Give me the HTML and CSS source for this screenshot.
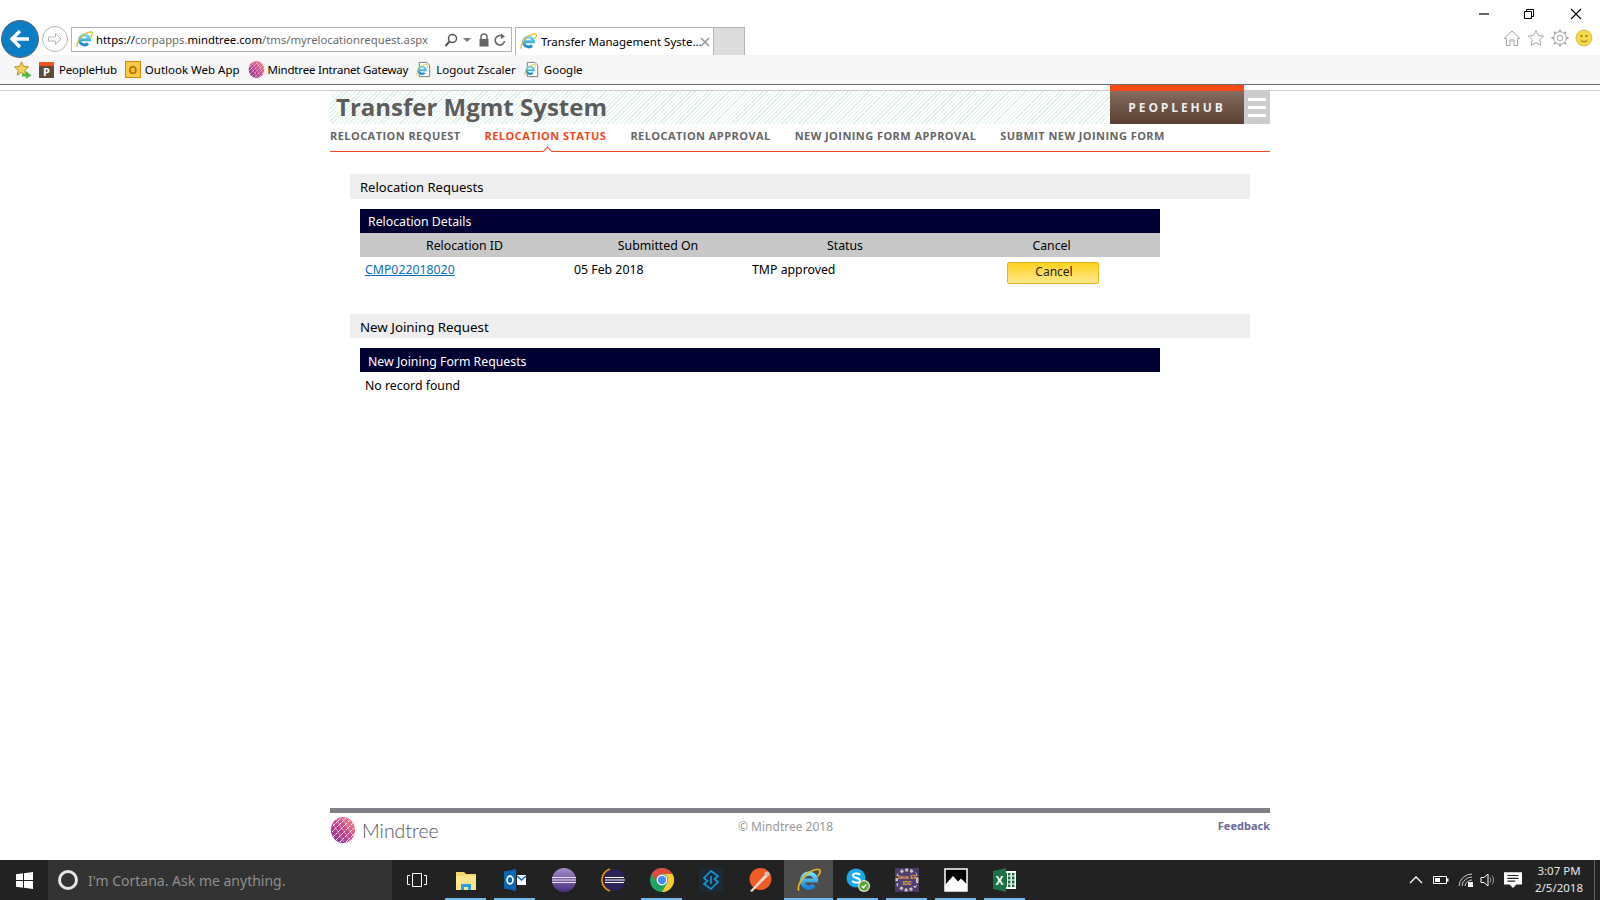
FILE: index.html
```html
<!DOCTYPE html>
<html lang="en">
<head>
    <meta charset="UTF-8">
    <title>Transfer Management System</title>
    <link rel="stylesheet" href="styles.css">
</head>
<body>
    <svg class="defs" width="0" height="0">
        <defs>
            <linearGradient id="ieBlue" x1="0" y1="0" x2="0" y2="1">
                <stop offset="0" stop-color="#6fdcf8"/>
                <stop offset="1" stop-color="#1b86d8"/>
            </linearGradient>
            <linearGradient id="mtGrad" x1="1" y1="0" x2="0" y2="1">
                <stop offset="0" stop-color="#f29a7e"/>
                <stop offset="0.5" stop-color="#c8408e"/>
                <stop offset="1" stop-color="#7b3a96"/>
            </linearGradient>
            <linearGradient id="eclipseGrad" x1="0" y1="0" x2="0" y2="1">
                <stop offset="0" stop-color="#a58cc8"/>
                <stop offset="1" stop-color="#4b2f80"/>
            </linearGradient>
            <symbol id="ie" viewBox="0 0 24 24">
                <path d="M5.500 12.500h13.500A7 7 0 1 0 17 17.500" fill="none" stroke="url(#ieBlue)" stroke-width="4.200"/>
                <path d="M2 22.500C-.5 19 5 9 11 5s11-4.500 12-2.500c.7 1.500-.8 4-2.500 6" fill="none" stroke="#e8b71e" stroke-width="1.700"/>
            </symbol>
            <symbol id="iePage" viewBox="0 0 18 18">
                <path d="M3.500 1.500h8l3 3v12h-11z" fill="#fff" stroke="#777"/>
                <use href="#ie" x="0" y="3" width="13" height="13"/>
            </symbol>
            <symbol id="mindtree" viewBox="0 0 26 26">
                <ellipse cx="13" cy="13" rx="12" ry="13" fill="url(#mtGrad)"/>
                <path d="M3 9 11 1M2 15 16 1M3 20 20 3M6 23 23 6M10 25 25 10M16 25 25 16" stroke="#fff" stroke-width="1" stroke-dasharray="2.500 1"/>
                <path d="M2 5 14 25M6 2 20 24M12 1 24 20" stroke="#fff" stroke-width=".6" opacity=".7"/>
            </symbol>
        </defs>
    </svg>

    <div class="browser">
        <div class="window-row">
            <svg class="win-btn" viewBox="0 0 14 14"><path d="M2 7h10" stroke="#000" stroke-width="1.200"/></svg>
            <svg class="win-btn" viewBox="0 0 14 14"><path d="M2.500 4.500h7v7h-7zM4.500 4.500v-2h7v7h-2" fill="none" stroke="#000"/></svg>
            <svg class="win-btn" viewBox="0 0 14 14"><path d="M2 2l10 10M12 2 2 12" stroke="#000" stroke-width="1.100"/></svg>
        </div>
        <div class="address-row">
            <div class="back-btn">
                <svg viewBox="0 0 24 24" width="24" height="24"><path d="M21 12H5M12 4l-8 8 8 8" fill="none" stroke="#fff" stroke-width="3.400"/></svg>
            </div>
            <div class="forward-btn">
                <svg viewBox="0 0 16 16" width="16" height="16"><path d="M1.500 6h7V2.500L14 8l-5.500 5.500V10h-7z" fill="none" stroke="#b5b5b5"/></svg>
            </div>
            <div class="address-box">
                <svg class="icon-16" viewBox="0 0 24 24"><use href="#ie"/></svg>
                <span class="url">https://<span class="url-dim">corpapps.</span>mindtree.com<span class="url-dim">/tms/myrelocationrequest.aspx</span></span>
                <svg class="addr-tool" viewBox="0 0 14 14"><circle cx="8.500" cy="5.500" r="4" fill="none" stroke="#555" stroke-width="1.500"/><path d="M5.500 8.500 1.500 13" stroke="#555" stroke-width="2"/></svg>
                <svg class="addr-caret" viewBox="0 0 8 4"><path d="M0 0h8L4 4z" fill="#777"/></svg>
                <svg class="addr-tool lock" viewBox="0 0 14 14"><path d="M4 6V4a3 3 0 0 1 6 0v2" fill="none" stroke="#666" stroke-width="1.500"/><rect x="2.500" y="6" width="9" height="7.500" fill="#666"/></svg>
                <svg class="addr-tool refresh" viewBox="0 0 14 14"><path d="M11.500 8A4.700 4.700 0 1 1 9.500 3.400" fill="none" stroke="#666" stroke-width="1.600"/><path d="M8 .5 12 3.500 8 6z" fill="#666"/></svg>
            </div>
            <div class="tab">
                <svg class="icon-16" viewBox="0 0 24 24"><use href="#ie"/></svg>
                <span class="tab-title">Transfer Management Syste...</span>
                <svg class="tab-close" viewBox="0 0 10 10"><path d="M1 1l8 8M9 1 1 9" stroke="#999" stroke-width="1.600"/></svg>
            </div>
            <div class="new-tab"></div>
            <div class="tools">
                <svg class="tool" viewBox="0 0 18 18"><path d="M1 9.500 9 2l8 7.500h-2.500V16.500H11V11H7v5.500H3.500V9.500z" fill="none" stroke="#a8a8a8"/></svg>
                <svg class="tool" viewBox="0 0 18 18"><path d="M9 1.500l2.300 5 5.500.6-4.100 3.700 1.200 5.500L9 13.500l-4.900 2.800 1.200-5.500L1.200 7.100l5.500-.6z" fill="none" stroke="#a8a8a8"/></svg>
                <svg class="tool" viewBox="0 0 18 18"><circle cx="9" cy="9" r="2.800" fill="none" stroke="#a8a8a8"/><circle cx="9" cy="9" r="6.300" fill="none" stroke="#a8a8a8"/><path d="M9 .5v2.200M9 15.300v2.200M.5 9h2.200M15.300 9h2.200M3 3l1.500 1.500M13.500 13.500 15 15M15 3l-1.500 1.500M4.500 13.500 3 15" stroke="#a8a8a8" stroke-width="1.800"/></svg>
                <svg class="tool" viewBox="0 0 18 18"><circle cx="9" cy="9" r="8" fill="#f5d94a" stroke="#bfa93a" stroke-width=".6"/><circle cx="6.500" cy="7" r="1" fill="#7d6a10"/><circle cx="11.500" cy="7" r="1" fill="#7d6a10"/><path d="M5.500 11c2 2.200 5 2.200 7 0" fill="none" stroke="#7d6a10"/></svg>
            </div>
        </div>
        <div class="favorites">
            <svg class="fav-star" viewBox="0 0 18 18"><path d="M7.500 .8l2 4.600 5 .5-3.700 3.300 1 4.900-4.300-2.500-4.300 2.500 1-4.900L.5 5.900l5-.5z" fill="#f3d35a" stroke="#b5902a"/><path d="M8 13h4v-3l5.500 4.500L12 18v-2.500H8z" fill="#56b848"/></svg>
            <div class="fav"><span class="fav-p">P</span><span class="tight">PeopleHub</span></div>
            <div class="fav"><span class="fav-o">O</span><span>Outlook Web App</span></div>
            <div class="fav"><svg class="icon-16" viewBox="0 0 26 26"><use href="#mindtree"/></svg><span class="tight">Mindtree Intranet Gateway</span></div>
            <div class="fav"><svg class="icon-16" viewBox="0 0 18 18"><use href="#iePage"/></svg><span>Logout Zscaler</span></div>
            <div class="fav"><svg class="icon-16" viewBox="0 0 18 18"><use href="#iePage"/></svg><span>Google</span></div>
        </div>
    </div>

    <div class="top-line">
        <div class="wrap top-line-inner"><div class="accent"></div></div>
    </div>

    <div class="wrap page">
        <div class="masthead">
            <div class="title-band">Transfer Mgmt System</div>
            <div class="peoplehub">PEOPLEHUB</div>
            <div class="burger"><span></span><span></span><span></span></div>
        </div>
        <div class="menu">
            <a>RELOCATION REQUEST</a>
            <a class="active">RELOCATION STATUS</a>
            <a>RELOCATION APPROVAL</a>
            <a>NEW JOINING FORM APPROVAL</a>
            <a>SUBMIT NEW JOINING FORM</a>
        </div>

        <div class="section-title first">Relocation Requests</div>
        <table class="grid">
            <colgroup>
                <col class="col-id"><col class="col-date"><col class="col-status"><col class="col-cancel">
            </colgroup>
            <tr class="grid-caption"><th colspan="4">Relocation Details</th></tr>
            <tr class="grid-head"><td>Relocation ID</td><td>Submitted On</td><td>Status</td><td>Cancel</td></tr>
            <tr class="grid-row">
                <td><a class="link">CMP022018020</a></td>
                <td>05 Feb 2018</td>
                <td>TMP approved</td>
                <td class="cell-btn"><button class="btn-cancel">Cancel</button></td>
            </tr>
        </table>

        <div class="section-title second">New Joining Request</div>
        <table class="grid grid-joining">
            <tr class="grid-caption"><th>New Joining Form Requests</th></tr>
            <tr class="grid-row"><td>No record found</td></tr>
        </table>

        <div class="footer">
            <div class="brand">
                <svg width="26" height="26" viewBox="0 0 26 26"><use href="#mindtree"/></svg>
                <span>Mindtree</span>
            </div>
            <div class="copy">© Mindtree 2018</div>
            <a class="feedback">Feedback</a>
        </div>
    </div>

    <div class="taskbar">
        <div class="start">
            <svg width="17" height="17" viewBox="0 0 17 17"><path d="M0 2.300 7 1.300v6.700H0zM8 1.200 17 0v8H8zM0 9h7v6.700l-7-1zM8 9h9v8l-9-1.200z" fill="#fff"/></svg>
        </div>
        <div class="search">
            <span class="cortana"></span>
            <span>I'm Cortana. Ask me anything.</span>
        </div>
        <div class="task-view">
            <svg width="20" height="16" viewBox="0 0 20 16"><path d="M5.500 1.500h9v13h-9zM3 3.500H.5v9H3M17 3.500h2.500v9H17" fill="none" stroke="#fff"/></svg>
        </div>
        <div class="apps">
            <div class="app on">
                <svg viewBox="0 0 24 24"><path d="M2 4h8l2 2h10v16H2z" fill="#f5d76e"/><path d="M2 8h20v14H2z" fill="#fbe58e"/><path d="M7 22v-6h10v6h-3v-3h-4v3z" fill="#2d9fe0"/></svg>
            </div>
            <div class="app on">
                <svg viewBox="0 0 24 24"><path d="M1 3.500 13 1v22L1 20.500z" fill="#0a64b4"/><ellipse cx="7" cy="12" rx="3" ry="3.800" fill="none" stroke="#fff" stroke-width="1.700"/><path d="M14 7h9v10h-9z" fill="#fff"/><path d="M14 8l4.500 4L23 8" fill="none" stroke="#0a64b4" stroke-width="1.400"/></svg>
            </div>
            <div class="app">
                <svg viewBox="0 0 24 24"><circle cx="12" cy="12" r="12" fill="url(#eclipseGrad)"/><path d="M0 9.500h24M0 12h24M0 14.500h24" stroke="#e8e0f4" stroke-width="1.100"/></svg>
            </div>
            <div class="app">
                <svg viewBox="0 0 24 24"><circle cx="13" cy="12" r="11" fill="#2c2255"/><path d="M4 12h20M4 9.500h19M4 14.500h19" stroke="#fff" stroke-width="1.200"/><path d="M9 1A11.500 11.500 0 0 0 9 23" fill="none" stroke="#f09a1e" stroke-width="1.600"/></svg>
            </div>
            <div class="app on">
                <svg viewBox="0 0 24 24"><circle cx="12" cy="12" r="12" fill="#1fa463"/><path d="M12 6h10.400A12 12 0 0 0 1.600 6L7 15a6 6 0 0 1 5-9z" fill="#dd4b3e"/><path d="M12 6h10.400A12 12 0 0 1 12 24l5.200-9A6 6 0 0 0 12 6z" fill="#fcc934"/><circle cx="12" cy="12" r="5.400" fill="#fff"/><circle cx="12" cy="12" r="4.200" fill="#4a8bf5"/></svg>
            </div>
            <div class="app">
                <svg viewBox="0 0 24 24"><path d="M0 0h24v24H0z" fill="#1c2a33"/><path d="M12 3l7 5-3.500 3 3.500 3-7 7-7-5 3.500-3L5 10z" fill="none" stroke="#1296d8" stroke-width="1.700"/><path d="M12 8v8" stroke="#1296d8" stroke-width="1.700"/></svg>
            </div>
            <div class="app">
                <svg viewBox="0 0 24 24"><circle cx="12.500" cy="11" r="11" fill="#ef5b25"/><path d="M2 23 12 12l2 2-10 10z" fill="#e9d6c6"/><path d="M12 12l6-6 2 2-6 6z" fill="#f3e4d8"/><circle cx="19" cy="6" r="2.500" fill="#d0c2b6"/></svg>
            </div>
            <div class="app active on">
                <svg viewBox="0 0 24 24"><use href="#ie"/></svg>
            </div>
            <div class="app on">
                <svg viewBox="0 0 24 24"><circle cx="10" cy="10" r="9.500" fill="#19a9ea"/><path d="M14 7c-1-2-7-2.200-7 .6 0 3 7 1.600 7 4.800 0 3-6.500 2.800-7.800.4" fill="none" stroke="#fff" stroke-width="2"/><circle cx="18" cy="18" r="6" fill="#e4e4e4"/><circle cx="18" cy="18" r="4.700" fill="#5aa52e"/><path d="M15.700 18l1.700 1.700 2.900-3.200" fill="none" stroke="#fff" stroke-width="1.300"/></svg>
            </div>
            <div class="app on">
                <svg viewBox="0 0 24 24"><path d="M0 0h24v24H0z" fill="#4b3a6a"/><circle cx="12" cy="12" r="10" fill="none" stroke="#c9c4bb" stroke-width="3" stroke-dasharray="3 2"/><path d="M3 5h18v13H3z" fill="#544078"/><text x="12" y="11" class="jee-text">Java EE</text><text x="12" y="17" class="jee-text">IDE</text></svg>
            </div>
            <div class="app on">
                <svg viewBox="0 0 24 24"><path d="M1 1h22v22H1z" fill="#000" stroke="#fff" stroke-width="1.500"/><path d="M1 22v-5l8-9 5 5.500 3-3 6 6V23H1z" fill="#fff"/></svg>
            </div>
            <div class="app on">
                <svg viewBox="0 0 24 24"><path d="M9 3h14v18H9z" fill="#fff"/><path d="M15 5h2.500v14H15zM19 5h2.500v14H19zM12 5h2v14h-2z" fill="#1e7145"/><path d="M15 8h7M15 12h7M15 16h7" stroke="#fff"/><path d="M0 3 13 0v24L0 21z" fill="#1e7145"/><text x="6.500" y="16.500" class="xl-text">X</text></svg>
            </div>
        </div>
        <div class="tray">
            <svg class="tray-icon" viewBox="0 0 16 16"><path d="M2 11l6-6 6 6" fill="none" stroke="#fff" stroke-width="1.300"/></svg>
            <svg class="tray-icon" viewBox="0 0 16 16"><path d="M.5 4.500h13v7H.5z" fill="none" stroke="#fff"/><path d="M2 6h5v4H2z" fill="#fff"/><path d="M14 6.500h1.500v3H14z" fill="#fff"/></svg>
            <svg class="tray-icon wifi" viewBox="0 0 16 16"><path d="M1 14A13 13 0 0 1 14 2M4 14A10 10 0 0 1 14 5M7 14A7 7 0 0 1 14 8" fill="none" stroke="#ccc"/><path d="M10 10h5v5h-5z" fill="#fff"/></svg>
            <svg class="tray-icon volume" viewBox="0 0 16 16"><path d="M1 5.500h3L8 2v12L4 10.500H1z" fill="none" stroke="#fff"/><path d="M10 5.500a4 4 0 0 1 0 5M12 3.500a7 7 0 0 1 0 9" fill="none" stroke="#999"/></svg>
            <svg class="tray-icon notif" viewBox="0 0 16 16"><path d="M0 1h16v11h-5l-3 3-3-3H0z" fill="#fff"/><path d="M3 4h10M3 6.500h10M3 9h7" stroke="#222"/></svg>
            <div class="clock"><div>3:07 PM</div><div>2/5/2018</div></div>
            <div class="show-desktop"></div>
        </div>
    </div>
</body>
</html>
```

FILE: styles.css
```css
html, body {
    margin: 0;
    height: 100%;
}
body {
    display: flex;
    flex-direction: column;
    height: 900px;
    overflow: hidden;
    background: #fff;
    color: #000;
    font-family: "Noto Sans", "Liberation Sans", sans-serif;
    font-size: 13px;
}
.defs {
    position: absolute;
}
.wrap {
    width: 940px;
    margin: 0 auto;
}

/* ie chrome */
.browser {
    height: 84px;
    border-bottom: 1px solid #6e6e6e;
    flex: none;
}
.window-row {
    display: flex;
    justify-content: flex-end;
    height: 27px;
    padding-right: 3px;
}
.win-btn {
    width: 14px;
    height: 14px;
    margin: 7px 14px 0 17px;
}
.win-btn:last-child {
    margin-left: 19px;
}
.address-row {
    display: flex;
    align-items: flex-start;
    height: 28px;
    position: relative;
}
.back-btn {
    width: 38px;
    height: 38px;
    margin: -7px 0 0 1px;
    border-radius: 50%;
    background: #0a7dc4;
    display: flex;
    align-items: center;
    justify-content: center;
    flex: none;
    z-index: 1;
    border: 1px solid #666;
    box-sizing: border-box;
}
.forward-btn {
    width: 26px;
    height: 26px;
    margin: -1px 3px 0 3px;
    border: 1px solid #b5b5b5;
    border-radius: 50%;
    box-sizing: border-box;
    display: flex;
    align-items: center;
    justify-content: center;
    flex: none;
}
.address-box {
    width: 441px;
    height: 25px;
    border: 1px solid #b4b4b4;
    box-sizing: border-box;
    display: flex;
    align-items: center;
    padding: 0 4px;
    flex: none;
}
.icon-16 {
    width: 17px;
    height: 17px;
    flex: none;
}
.url {
    margin-left: 3px;
    font-size: 11.3px;
    width: 336px;
    white-space: nowrap;
    flex: none;
}
.url-dim {
    color: #6b6b6b;
}
.addr-tool {
    width: 14px;
    height: 14px;
    margin-left: 12px;
    flex: none;
}
.addr-tool.lock {
    margin-left: 6px;
}
.addr-tool.refresh {
    margin-left: 2px;
}
.addr-caret {
    width: 8px;
    height: 4px;
    margin-left: 5px;
    flex: none;
}
.tab {
    width: 199px;
    height: 28px;
    margin-left: 3px;
    border: 1px solid #b4b4b4;
    border-bottom: none;
    box-sizing: border-box;
    display: flex;
    align-items: center;
    padding: 0 4px;
    flex: none;
    background: #fff;
}
.tab-title {
    margin-left: 4px;
    font-size: 11.5px;
    white-space: nowrap;
    width: 156px;
    flex: none;
}
.tab-close {
    width: 10px;
    height: 10px;
    margin-left: 3px;
    flex: none;
}
.new-tab {
    width: 31px;
    height: 28px;
    background: #dcdcdc;
    border: 1px solid #b4b4b4;
    border-left: none;
    border-bottom: none;
    box-sizing: border-box;
    flex: none;
}
.tools {
    margin-left: auto;
    display: flex;
    gap: 6px;
    padding-right: 7px;
}
.tool {
    width: 18px;
    height: 18px;
    margin-top: 2px;
}
.favorites {
    height: 29px;
    background: #f6f6f6;
    display: flex;
    align-items: center;
    padding-left: 14px;
    font-size: 11.5px;
    white-space: nowrap;
}
.fav-star {
    width: 18px;
    height: 18px;
    margin-right: 7px;
    flex: none;
}
.fav {
    display: flex;
    align-items: center;
    gap: 3px;
    margin-right: 8px;
}
.tight {
    letter-spacing: -0.2px;
}
.fav-p {
    width: 15px;
    height: 16px;
    margin-right: 2px;
    background: linear-gradient(#f0541e 0 4px, #5f4a3e 4px);
    color: #fff;
    font-weight: 700;
    font-size: 11px;
    line-height: 19px;
    text-align: center;
}
.fav-o {
    width: 14px;
    height: 15px;
    margin-right: 1px;
    background: #f7c948;
    border: 1px solid #d08a10;
    color: #c06a00;
    font-weight: 700;
    font-size: 11px;
    line-height: 15px;
    text-align: center;
}

/* page */
.top-line {
    height: 5px;
    border-bottom: 1px solid #ccc;
    flex: none;
}
.top-line-inner {
    display: flex;
    justify-content: flex-end;
}
.accent {
    width: 134px;
    height: 6px;
    margin-right: 26px;
    background: #f74a17;
}
.page {
    flex: 1;
    display: flex;
    flex-direction: column;
    min-height: 0;
}
.masthead {
    display: flex;
    height: 33px;
}
.title-band {
    flex: 1;
    padding-left: 6px;
    font-family: "Open Sans", sans-serif;
    font-weight: 700;
    font-size: 24px;
    line-height: 31px;
    color: #5c5c5c;
    background: repeating-linear-gradient(135deg, #dff0e9 0 1px, #fff 1px 3px);
}
.peoplehub {
    width: 134px;
    background: linear-gradient(#856c5f, #5a3f32);
    color: #eee;
    font-family: "Open Sans", sans-serif;
    font-weight: 700;
    font-size: 12px;
    letter-spacing: 2.9px;
    text-align: center;
    line-height: 33px;
}
.burger {
    width: 26px;
    background: #ccc;
    display: flex;
    flex-direction: column;
    align-items: center;
    justify-content: center;
    gap: 5px;
}
.burger span {
    width: 18px;
    height: 3px;
    background: #fff;
}
.menu {
    height: 27px;
    border-bottom: 1px solid #f1491c;
    display: flex;
    gap: 24px;
    font-family: "Open Sans", sans-serif;
    font-weight: 700;
    font-size: 11px;
    letter-spacing: 0.44px;
    line-height: 24px;
    color: #666;
}
.menu a.active {
    color: #f1491c;
    position: relative;
}
.menu a.active::after {
    content: "";
    position: absolute;
    left: 50%;
    bottom: -4px;
    width: 6px;
    height: 6px;
    margin-left: -1px;
    background: #fff;
    border-left: 1px solid #f1491c;
    border-top: 1px solid #f1491c;
    transform: rotate(45deg);
}
.section-title {
    margin: 0 20px;
    height: 25px;
    padding-left: 10px;
    background: #eee;
    font-size: 13px;
    line-height: 26px;
}
.section-title.first {
    margin-top: 22px;
}
.section-title.second {
    margin-top: 30px;
    height: 24px;
    font-size: 13.3px;
}
.grid {
    width: 800px;
    margin: 10px 0 0 30px;
    border-collapse: collapse;
    table-layout: fixed;
    font-size: 12.3px;
}
.grid td, .grid th {
    padding: 0 5px;
    height: 24px;
    box-sizing: border-box;
    white-space: nowrap;
}
.col-id { width: 209px; }
.col-date { width: 178px; }
.col-status { width: 196px; }
.col-cancel { width: 217px; }
.grid-caption th {
    background: #000033;
    color: #fff;
    font-weight: 400;
    text-align: left;
    padding-left: 8px;
}
.grid-joining .grid-caption th {
    padding-top: 2px;
}
.grid-head td {
    background: #c8c8c8;
    text-align: center;
}
.grid-row td {
    vertical-align: top;
    padding-top: 3px;
    line-height: 20px;
}
.grid-joining .grid-row td {
    padding-top: 4px;
}
.grid td.cell-btn {
    text-align: center;
    padding: 5px 0 0 3px;
}
.link {
    color: #0a6ebd;
    text-decoration: underline;
}
.btn-cancel {
    display: inline-block;
    width: 92px;
    height: 22px;
    padding: 0 0 3px 2px;
    border: 1px solid #e3b520;
    border-radius: 2px;
    background: linear-gradient(#ffd21f, #ffe88a);
    font-family: inherit;
    font-size: 12px;
    color: #222;
}
.footer {
    margin-top: auto;
    height: 47px;
    border-top: 5px solid #7f7f85;
    display: flex;
}
.brand {
    display: flex;
    align-items: center;
    gap: 6px;
    width: 408px;
    height: 30px;
    padding-top: 2px;
    font-family: "Lato", sans-serif;
    font-weight: 300;
    font-size: 19.5px;
    color: #555;
}
.copy {
    color: #999;
    font-size: 12px;
    line-height: 27px;
}
.feedback {
    margin-left: auto;
    color: #6a6a9c;
    font-weight: 700;
    font-size: 11px;
    line-height: 26px;
}

/* windows taskbar */
.taskbar {
    height: 40px;
    background: #222;
    display: flex;
    align-items: stretch;
    flex: none;
}
.start {
    width: 48px;
    display: flex;
    align-items: center;
    justify-content: center;
}
.search {
    width: 344px;
    background: #333;
    display: flex;
    align-items: center;
    gap: 10px;
    padding-left: 10px;
    box-sizing: border-box;
    color: #8f8f8f;
    font-size: 14px;
}
.cortana {
    width: 20px;
    height: 20px;
    border: 3px solid #e6e6e6;
    border-radius: 50%;
    box-sizing: border-box;
}
.task-view {
    width: 49px;
    display: flex;
    align-items: center;
    justify-content: center;
}
.apps {
    display: flex;
}
.app {
    width: 49px;
    display: flex;
    align-items: center;
    justify-content: center;
    position: relative;
}
.app svg {
    width: 24px;
    height: 24px;
}
.app.on::after {
    content: "";
    position: absolute;
    left: 4px;
    right: 4px;
    bottom: 0;
    height: 2px;
    background: #76b9ed;
}
.app.active {
    background: #4d4d4d;
}
.app.active::after {
    left: 0;
    right: 0;
}
.jee-text {
    font-family: "Liberation Sans", sans-serif;
    font-size: 5.5px;
    font-weight: 700;
    fill: #e8a33a;
    text-anchor: middle;
}
.xl-text {
    font-family: "Liberation Sans", sans-serif;
    font-size: 12px;
    font-weight: 700;
    fill: #fff;
    text-anchor: middle;
}
.tray {
    margin-left: auto;
    display: flex;
    align-items: center;
    color: #e6e6e6;
    font-size: 11.5px;
}
.tray-icon {
    width: 16px;
    height: 16px;
    margin-right: 9px;
}
.tray-icon.wifi {
    margin-right: 6px;
}
.tray-icon.volume {
    margin-right: 8px;
}
.tray-icon.notif {
    width: 18px;
    height: 18px;
    margin-right: 5px;
}
.clock {
    width: 64px;
    padding-bottom: 3px;
    text-align: center;
    line-height: 17px;
}
.show-desktop {
    width: 5px;
    height: 100%;
    margin-left: 3px;
    border-left: 1px solid #666;
}
```
